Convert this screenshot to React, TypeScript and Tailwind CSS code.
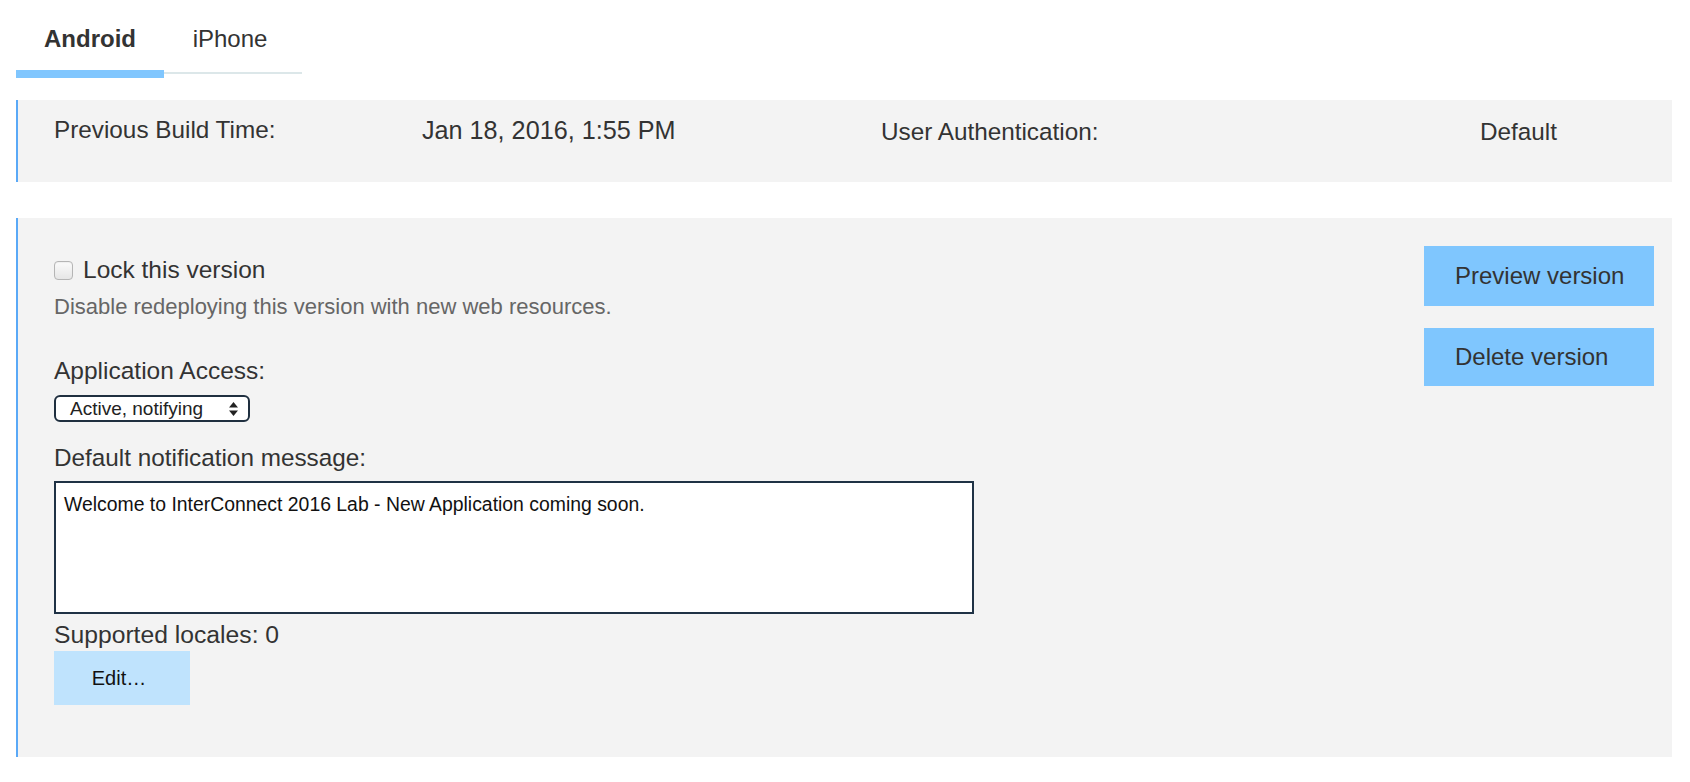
import React from "react";

export default function App() {
  return (
    <div className="w-full h-[782px] bg-white pl-[16px] pr-[18px] font-['Liberation_Sans',Arial,sans-serif] text-[#333]">
      {/* Tabs */}
      <div className="flex">
        <div className="w-[148px] flex flex-col">
          <div className="pt-[25px] h-[70px] text-center text-[24px] leading-[28px] font-bold text-[#333]">Android</div>
          <div className="h-[8px] bg-[#80c6fe]" />
        </div>
        <div className="w-[138px] flex flex-col">
          <div className="pt-[25px] h-[70px] text-center text-[24px] leading-[28px] text-[#333] pr-[6px]">iPhone</div>
          <div className="h-[8px] pt-[2px]">
            <div className="h-[2px] bg-[#dce7e9]" />
          </div>
        </div>
      </div>

      {/* Panel 1 */}
      <div className="mt-[22px] h-[82px] bg-[#f3f3f3] border-l-2 border-[#5aa9f7] pl-[36px] pt-[16px] flex text-[24.3px] leading-[28px]">
        <div className="w-[368px]">Previous Build Time:</div>
        <div className="w-[459px] text-[25.2px]">Jan 18, 2016, 1:55 PM</div>
        <div className="w-[599px] pt-[2px]">User Authentication:</div>
        <div className="pt-[2px]">Default</div>
      </div>

      {/* Panel 2 */}
      <div className="mt-[36px] h-[539px] bg-[#f3f3f3] border-l-2 border-[#5aa9f7] flex">
        <div className="flex-1 pl-[36px] pt-[38px] flex flex-col items-start">
          <label className="flex items-center gap-[10px] text-[24.5px] leading-[28px] text-[#333]">
            <span className="w-[19px] h-[19px] rounded-[4px] border border-[#b5b5b5] bg-gradient-to-b from-[#fbfbfb] to-[#e6e6e6] shadow-[inset_0_1px_1px_rgba(0,0,0,0.05)]" />
            <span>Lock this version</span>
          </label>
          <div className="mt-[10px] text-[22px] leading-[26px] text-[#666]">
            Disable redeploying this version with new web resources.
          </div>
          <div className="mt-[37px] text-[24.5px] leading-[28px] text-[#333]">Application Access:</div>
          <div className="mt-[10px] w-[196px] h-[27px] rounded-[6px] border-2 border-[#1f2f3f] bg-white flex items-center justify-between pl-[14px] pr-[10px]">
            <span className="text-[19px] leading-[20px] text-[#222]">Active, notifying</span>
            <svg width="9" height="14" viewBox="0 0 9 14">
              <path d="M4.5 0 L9 5.5 L0 5.5 Z" fill="#222" />
              <path d="M4.5 14 L9 8.5 L0 8.5 Z" fill="#222" />
            </svg>
          </div>
          <div className="mt-[22px] text-[24.3px] leading-[28px] text-[#333]">Default notification message:</div>
          <div className="mt-[9px] w-[920px] h-[133px] border-2 border-[#1f3245] bg-white pl-[8px] pt-[10px] text-[19.4px] leading-[22px] text-[#111]">
            Welcome to InterConnect 2016 Lab - New Application coming soon.
          </div>
          <div className="mt-[7px] text-[24.7px] leading-[28px] text-[#333]">Supported locales: 0</div>
          <button className="mt-[2px] w-[136px] h-[54px] bg-[#bfe3fd] text-[20px] text-[#111] flex items-center justify-center pr-[6px]">
            Edit…
          </button>
        </div>
        <div className="w-[230px] mr-[18px] pt-[28px] flex flex-col gap-[22px]">
          <button className="h-[60px] bg-[#7fc6fe] text-[24px] leading-[28px] text-[#333] text-left pl-[31px]">Preview version</button>
          <button className="h-[58px] bg-[#7fc6fe] text-[24px] leading-[28px] text-[#333] text-left pl-[31px]">Delete version</button>
        </div>
      </div>
    </div>
  );
}
